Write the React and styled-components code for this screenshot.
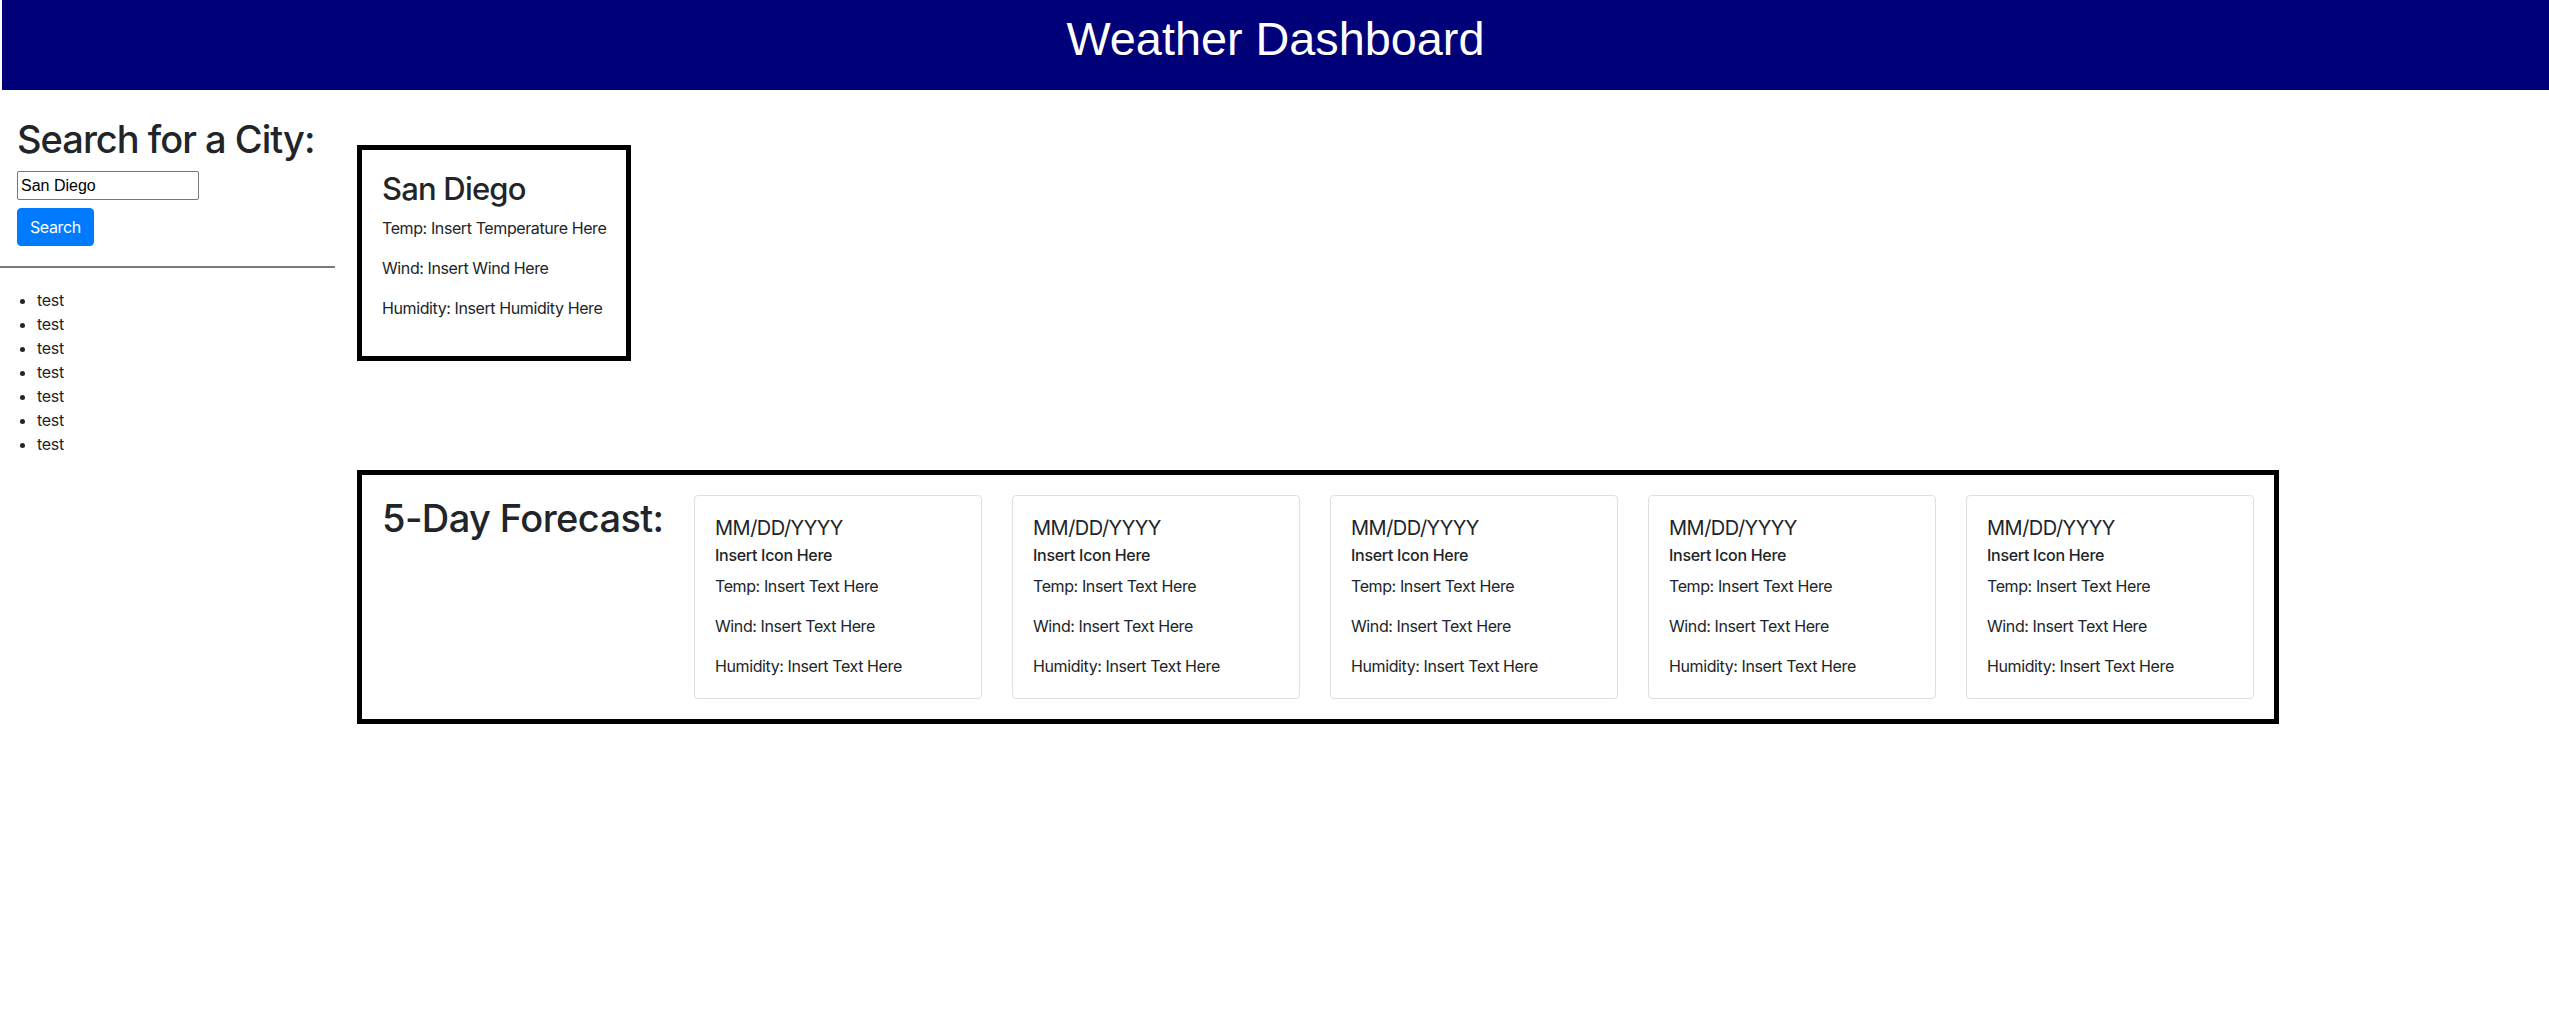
import React from "react";
import styled, { createGlobalStyle } from "styled-components";

const GlobalStyle = createGlobalStyle`
  *, *::before, *::after { box-sizing: border-box; }
  html, body { margin: 0; padding: 0; background: #fff; }
  body {
    font-family: Inter, "Noto Sans", sans-serif;
    font-size: 16px;
    line-height: 1.5;
    color: #212529;
  }
`;

const Header = styled.header`
  margin-left: 2px;
  height: 90px;
  padding-top: 11px;
  background: #000078;
  text-align: center;
`;

const Title = styled.h1`
  margin: 0;
  font-family: "Liberation Sans", Arial, sans-serif;
  font-weight: 400;
  font-size: 46.8px;
  line-height: 1.2;
  color: #ffffff;
`;

const Layout = styled.div`
  display: flex;
  align-items: flex-start;
`;

const Sidebar = styled.aside`
  flex: 0 0 335px;
  width: 335px;
`;

const SearchForm = styled.form`
  display: flex;
  flex-direction: column;
  align-items: flex-start;
  padding: 26px 0 0 17px;
`;

const SidebarTitle = styled.h1`
  margin: 0 0 9px;
  font-size: 38px;
  font-weight: 500;
  line-height: 46px;
  letter-spacing: -0.98px;
  white-space: nowrap;
`;

const CityInput = styled.input`
  width: 182px;
  height: 29px;
  padding: 0 3px;
  border: 1px solid #767676;
  border-radius: 2px;
  font-family: "Liberation Sans", Arial, sans-serif;
  font-size: 16px;
  color: #000;
  background: #fff;
`;

const SearchButton = styled.button`
  margin-top: 8px;
  height: 38px;
  padding: 0 12px;
  border: 1px solid #007bff;
  border-radius: 4px;
  background: #007bff;
  color: #fff;
  font-family: inherit;
  font-size: 16px;
  line-height: 1.5;
  letter-spacing: -0.4px;
  cursor: pointer;
`;

const Divider = styled.hr`
  margin: 20px 0;
  height: 0;
  border: 0;
  border-top: 2px solid #7a7a7a;
`;

const HistoryList = styled.ul`
  margin: 0;
  padding-left: 37px;
  list-style: disc;
`;

const HistoryItem = styled.li`
  line-height: 24px;
  letter-spacing: -0.3px;
`;

const Main = styled.main`
  flex: 1;
  display: flex;
  flex-direction: column;
  align-items: flex-start;
  padding: 55px 0 0 22px;
`;

const CurrentCard = styled.section`
  border: 5px solid #000;
  padding: 20px;
`;

const CityName = styled.h2`
  margin: 0 0 8px;
  font-size: 31px;
  font-weight: 500;
  line-height: 38px;
  letter-spacing: -0.8px;
`;

const Stat = styled.p`
  margin: 0 0 16px;
  line-height: 24px;
  letter-spacing: -0.4px;
`;

const ForecastPanel = styled.section`
  margin-top: 109px;
  display: flex;
  align-items: flex-start;
  border: 5px solid #000;
  padding: 20px;
`;

const ForecastTitle = styled.h1`
  flex: 0 0 282px;
  width: 282px;
  min-width: 0;
  margin: 0;
  font-size: 38px;
  font-weight: 500;
  line-height: 46px;
  letter-spacing: -0.6px;
  white-space: nowrap;
`;

const CardRow = styled.div`
  display: flex;
  gap: 30px;
  margin-left: 30px;
`;

const DayCard = styled.article`
  width: 288px;
  padding: 20px;
  border: 1px solid rgba(0, 0, 0, 0.125);
  border-radius: 4px;
`;

const CardDate = styled.h5`
  margin: 0;
  font-size: 20px;
  font-weight: 400;
  line-height: 24px;
  letter-spacing: -0.5px;
`;

const CardIcon = styled.h6`
  margin: 5px 0 9px;
  font-size: 16px;
  font-weight: 500;
  line-height: 20px;
  letter-spacing: -0.3px;
`;

const CardText = styled.p`
  margin: 0 0 16px;
  line-height: 24px;
  letter-spacing: -0.4px;
  &:last-child { margin-bottom: 0; }
`;

const history = ["test", "test", "test", "test", "test", "test", "test"];
const days = [1, 2, 3, 4, 5];

export default function App() {
  return (
    <>
      <GlobalStyle />
      <Header>
        <Title>Weather Dashboard</Title>
      </Header>
      <Layout>
        <Sidebar>
          <SearchForm onSubmit={(e) => e.preventDefault()}>
            <SidebarTitle>Search for a City:</SidebarTitle>
            <CityInput type="text" defaultValue="San Diego" />
            <SearchButton type="submit">Search</SearchButton>
          </SearchForm>
          <Divider />
          <HistoryList>
            {history.map((h, i) => (
              <HistoryItem key={i}>{h}</HistoryItem>
            ))}
          </HistoryList>
        </Sidebar>
        <Main>
          <CurrentCard>
            <CityName>San Diego</CityName>
            <Stat>Temp: Insert Temperature Here</Stat>
            <Stat>Wind: Insert Wind Here</Stat>
            <Stat>Humidity: Insert Humidity Here</Stat>
          </CurrentCard>
          <ForecastPanel>
            <ForecastTitle>5-Day Forecast:</ForecastTitle>
            <CardRow>
              {days.map((d) => (
                <DayCard key={d}>
                  <CardDate>MM/DD/YYYY</CardDate>
                  <CardIcon>Insert Icon Here</CardIcon>
                  <CardText>Temp: Insert Text Here</CardText>
                  <CardText>Wind: Insert Text Here</CardText>
                  <CardText>Humidity: Insert Text Here</CardText>
                </DayCard>
              ))}
            </CardRow>
          </ForecastPanel>
        </Main>
      </Layout>
    </>
  );
}
